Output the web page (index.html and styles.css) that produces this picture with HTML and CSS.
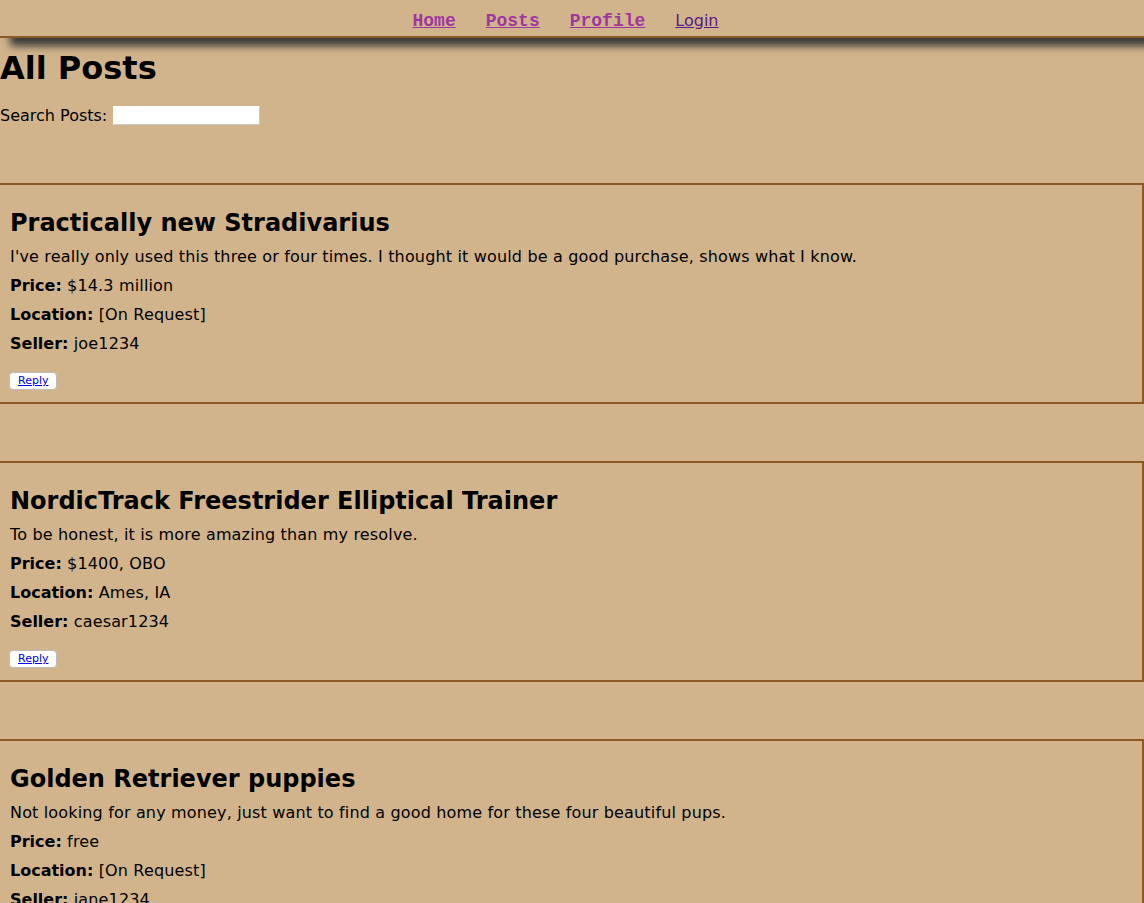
FILE: index.html
```html
<!DOCTYPE html>
<html>
<head>
<meta charset="utf-8">
<title>All Posts</title>
<link rel="stylesheet" href="styles.css">
</head>
<body>
<nav class="topnav">
  <a class="navlink mono" href="#">Home</a>
  <a class="navlink mono" href="#">Posts</a>
  <a class="navlink mono" href="#">Profile</a>
  <a class="navlink login" href="#">Login</a>
</nav>
<main class="page">
  <h1 class="title">All Posts</h1>
  <div class="search">
    <label class="search-label">Search Posts:</label>
    <input class="search-input" type="text">
  </div>
  <section class="posts">
    <article class="post">
      <h2 class="post-title">Practically new Stradivarius</h2>
      <p class="post-line">I've really only used this three or four times. I thought it would be a good purchase, shows what I know.</p>
      <p class="post-line"><b>Price:</b> $14.3 million</p>
      <p class="post-line"><b>Location:</b> [On Request]</p>
      <p class="post-line"><b>Seller:</b> joe1234</p>
      <button class="reply"><a href="#">Reply</a></button>
    </article>
    <article class="post">
      <h2 class="post-title">NordicTrack Freestrider Elliptical Trainer</h2>
      <p class="post-line">To be honest, it is more amazing than my resolve.</p>
      <p class="post-line"><b>Price:</b> $1400, OBO</p>
      <p class="post-line"><b>Location:</b> Ames, IA</p>
      <p class="post-line"><b>Seller:</b> caesar1234</p>
      <button class="reply"><a href="#">Reply</a></button>
    </article>
    <article class="post">
      <h2 class="post-title">Golden Retriever puppies</h2>
      <p class="post-line">Not looking for any money, just want to find a good home for these four beautiful pups.</p>
      <p class="post-line"><b>Price:</b> free</p>
      <p class="post-line"><b>Location:</b> [On Request]</p>
      <p class="post-line"><b>Seller:</b> jane1234</p>
      <button class="reply"><a href="#">Reply</a></button>
    </article>
  </section>
</main>
</body>
</html>
```

FILE: styles.css
```css
html, body {
  margin: 0;
  padding: 0;
  background: #d2b48c;
  color: #000;
  font-family: "DejaVu Sans", Verdana, sans-serif;
  font-size: 16px;
}

.topnav {
  display: flex;
  justify-content: center;
  align-items: baseline;
  gap: 30px;
  height: 36px;
  padding-right: 13px;
  border-bottom: 2px solid #8b5a24;
  box-shadow: 10px 8px 8px #3a3a3a;
  box-sizing: content-box;
  line-height: 42px;
}

.navlink {
  color: #a0369f;
  text-decoration: underline;
}

.navlink.mono {
  font-family: "Liberation Mono", "Courier New", monospace;
  font-weight: bold;
  font-size: 18px;
}

.navlink.login {
  color: #551a8b;
  font-size: 16px;
}

.title {
  margin: 11px 0 0 0;
  font-size: 32px;
  font-weight: bold;
  line-height: 38px;
}

.search {
  display: flex;
  align-items: center;
  margin-top: 18px;
  height: 20px;
}

.search-label {
  font-size: 16px;
}

.search-input {
  margin: 0 0 0 6px;
  width: 145px;
  height: 17px;
  padding: 0;
  border: 1px solid #c8c8c8;
  border-top-color: #fff;
  border-left-color: #fff;
  background: #fff;
}

.posts {
  display: flex;
  flex-direction: column;
  gap: 57px;
  margin-top: 58px;
}

.post {
  border: 2px solid #8b5a24;
  border-left: none;
  padding: 0 10px 12px 10px;
}

.post-title {
  margin: 24px 0 9px 0;
  font-size: 24px;
  line-height: 29px;
  font-weight: bold;
}

.post-line {
  margin: 0 0 10px 0;
  line-height: 19px;
  letter-spacing: 0.16px;
}

.post-line b {
  letter-spacing: 0;
}

.reply {
  margin: 19px 0 0 -1px;
  display: block;
  background: #fff;
  border: 1px solid #bdbdbd;
  border-radius: 4px;
  padding: 1px 8px 1px 8px;
  font-size: 11px;
  line-height: 14px;
  font-family: "DejaVu Sans", Verdana, sans-serif;
}

.reply a {
  color: #0000ee;
}
```
